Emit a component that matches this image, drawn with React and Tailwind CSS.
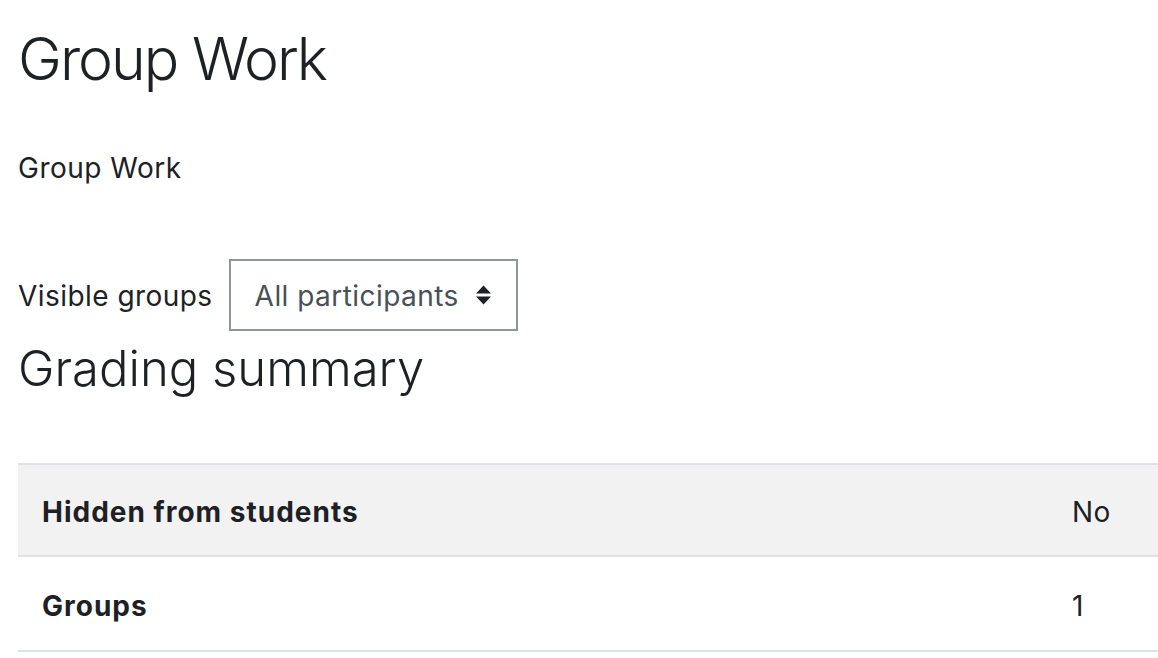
export default function App() {
  return (
    <div
      className="min-h-screen bg-white text-[#1d2125] pl-[18px] overflow-hidden"
      style={{ fontFamily: "Inter, 'Noto Sans', sans-serif" }}
    >
      <h2 className="pt-[23px] text-[59px] leading-[72px] font-light tracking-[-2px]">Group Work</h2>

      <p className="mt-[54px] text-[28px] leading-[39px] tracking-[0.5px]">Group Work</p>

      <div className="mt-[71px] flex items-center gap-[16px]">
        <label className="pt-[2px] text-[28px] leading-[39px] tracking-[0.45px]">Visible groups</label>
        <div className="flex items-center h-[72px] w-[289px] border-2 border-[#8f959e] pl-[24px] pr-[24px] text-[#495057]">
          <span className="pt-[2px] text-[28px] leading-[39px] tracking-[0.45px] flex-1">All participants</span>
          <svg width="17" height="20" viewBox="0 0 17 20" className="shrink-0">
            <path d="M8.5 0.5 L16 8.5 L1 8.5 Z" fill="#1d2125" />
            <path d="M1 11.5 L16 11.5 L8.5 19.5 Z" fill="#1d2125" />
          </svg>
        </div>
      </div>

      <h3 className="mt-[8px] text-[49px] leading-[59px] font-light">Grading summary</h3>

      <table className="mt-[65px] w-[1160px] border-collapse text-[28px]">
        <tbody>
          <tr className="bg-[#f2f2f2] border-t-2 border-b-2 border-[#dee2e6]">
            <th className="h-[92px] pt-[4px] pl-[24px] text-left font-bold tracking-[1px]">Hidden from students</th>
            <td className="w-[106px] pt-[4px] text-left tracking-[0.5px]">No</td>
          </tr>
          <tr className="border-b-2 border-[#dee2e6]">
            <th className="h-[95px] pt-[4px] pl-[24px] text-left font-bold tracking-[1px]">Groups</th>
            <td className="w-[106px] pt-[4px] text-left">1</td>
          </tr>
        </tbody>
      </table>
    </div>
  );
}
